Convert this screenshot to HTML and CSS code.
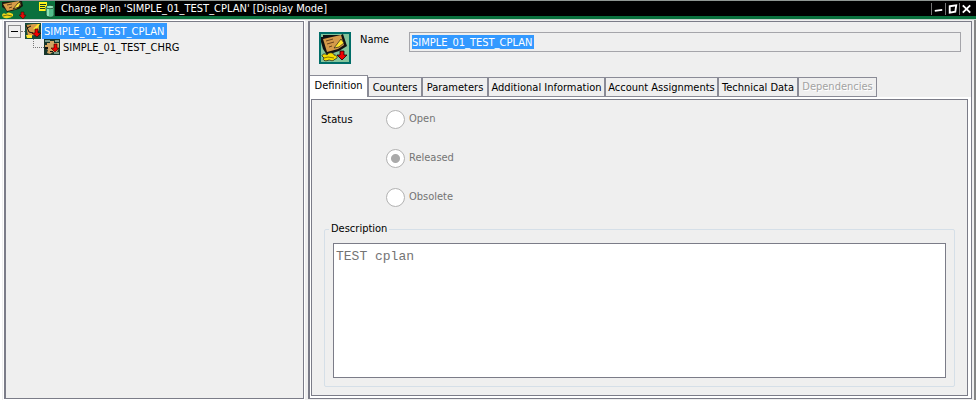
FILE: index.html
```html
<!DOCTYPE html>
<html lang="en">
<head>
<meta charset="utf-8">
<title>Charge Plan</title>
<link rel="stylesheet" href="styles.css">
</head>
<body>
<div class="window">
  <header class="titlebar">
    <div class="title-icons">
      <svg class="title-plan" viewBox="0 0 26 18" aria-hidden="true">
        <path fill="#18170e" d="M1 1 19 0h2l1 5-4 3-12 3-2-3-3-2z"/>
        <path fill="#d79c49" d="m2 3 16-3 2 4-5 4-9 2z"/>
        <path stroke="#634019" fill="none" d="m6 4 5-1M8 7l3-1"/>
        <path stroke="#111" stroke-width=".7" fill="#ffe83c" d="m12 8 5-6 3-1-2 5z"/>
        <path fill="#ecd719" d="M1 14q1-3 4-1 2-3 7 0v2q-2 2-5 2-5 1-6-3z"/>
        <path stroke="#736b0c" fill="none" d="m2 15 4-1 5 1"/>
        <path stroke="#310" stroke-width=".6" fill="#e00909" d="M20 11h3v3h2l-3 4-4-4h2z"/>
      </svg>
      <svg class="title-data" viewBox="0 0 16 18" aria-hidden="true">
        <path fill="#fff21c" d="M0 1h8v9H0z"/>
        <path stroke="#163c22" d="M1 3.500h6M1 5.500h5M1 7.500h5"/>
        <path stroke="#163c22" stroke-width=".7" fill="#52bd8b" d="M7 6v8c1 3 8 3 8 0V6z"/>
        <path fill="#8ce5b5" d="M8 7h2v8H8z"/>
        <ellipse cx="11" cy="6" rx="4" ry="1.700" stroke="#163c22" stroke-width=".7" fill="#94e9bc"/>
      </svg>
    </div>
    <h1>Charge Plan 'SIMPLE_01_TEST_CPLAN' [Display Mode]</h1>
    <div class="controls">
      <button aria-label="Minimize"><svg viewBox="0 0 14 12"><path d="m3 8 8-1"/></svg></button>
      <button aria-label="Maximize"><svg viewBox="0 0 14 12"><path d="m4 3 7-1-1 7-6 1z"/></svg></button>
      <button aria-label="Close"><svg viewBox="0 0 14 12"><path d="m3 2 8 8m0-8-8 8"/></svg></button>
    </div>
  </header>
  <main>
    <nav class="tree" aria-label="Charge plan tree">
      <div class="node">
        <button class="toggle" aria-label="Collapse"></button><span class="dots"></span>
        <svg class="node-icon" viewBox="0 0 16 16" aria-hidden="true">
          <path fill="#174c3b" d="M0 0h16v16H0z"/>
          <path fill="#d69a48" d="M1 2 8 1h6v6l-4 5-7 1z"/>
          <path stroke="#111" fill="none" d="m1 2 3 7 4 1M2 5l4-2"/>
          <path fill="#ffe82d" d="m8 6 5-5h2l-4 6zM1 12h6v3H2z"/>
          <path stroke="#200" stroke-width=".6" fill="#f00000" d="M10 6h3v4h3l-4 4-5-4h3z"/>
        </svg>
        <a href="#plan-tab" class="selected">SIMPLE_01_TEST_CPLAN</a>
      </div>
      <div class="node child">
        <span class="branch"></span>
        <svg class="node-icon" viewBox="0 0 16 16" aria-hidden="true">
          <path fill="#16352a" d="M0 0h16v16H0z"/>
          <path fill="#789987" d="M1 1h5v2H1zM11 1h4v2h-4zM10 13h5v2h-5z"/>
          <path fill="#d3a562" d="M3 4h3V2h4v2h5v5l-2 4H9l-3 2-3-1 1-3-3-2V6h2z"/>
          <path fill="#111" d="M1 8h3v2H1zM6 12h3v1H6z"/>
          <path stroke="#200" stroke-width=".6" fill="#f00000" d="M10 5h3v4h2l-4 4-4-4h3z"/>
        </svg>
        <a href="#plan-tab">SIMPLE_01_TEST_CHRG</a>
      </div>
    </nav>
    <section class="detail">
      <div class="identity">
        <svg class="plan-icon" viewBox="0 0 28 28" aria-hidden="true">
          <path fill="#83c49b" d="M0 0h28v28H0z"/>
          <path fill="#111" d="M0 3h2V1h18l2-1 4 12-8 5-12 4-4-6L0 8z"/>
          <path fill="#d49a4a" d="M2 5 20 1l3 10-6 4-11 3z"/>
          <path stroke="#6b431b" fill="none" d="m5 7 7-2M6 10l7-2M8 13l3-1"/>
          <path stroke="#222" stroke-width=".7" fill="#ffe62b" d="m13 14 7-9 3 4-5 4z"/>
          <path stroke="#222" stroke-width=".8" fill="#f5dc00" d="M1 22c0-2 3-3 5-1 1-3 7-3 7 0 4 0 4 4 1 4-2 3-5 1-6 1-4 2-7 0-5-2z"/>
          <path stroke="#8c7100" fill="none" d="m3 24 4-1 6 1"/>
          <path stroke="#160000" stroke-width=".8" fill="#f00000" d="M19 17h4v4h3l-5 5-5-5h3z"/>
        </svg>
        <label for="name">Name</label>
        <div class="name-field"><input id="name" readonly value="SIMPLE_01_TEST_CPLAN"></div>
      </div>
      <div class="tabs" role="tablist">
        <button role="tab" aria-selected="true" class="active">Definition</button>
        <button role="tab">Counters</button>
        <button role="tab">Parameters</button>
        <button role="tab">Additional Information</button>
        <button role="tab">Account Assignments</button>
        <button role="tab">Technical Data</button>
        <button role="tab" disabled>Dependencies</button>
      </div>
      <div class="sheet" id="plan-tab">
        <div class="page">
          <div class="status" role="radiogroup" aria-labelledby="status-label">
            <span id="status-label">Status</span>
            <div class="options">
              <label><input type="radio" name="status" disabled>Open</label>
              <label><input type="radio" name="status" disabled checked>Released</label>
              <label><input type="radio" name="status" disabled>Obsolete</label>
            </div>
          </div>
          <fieldset>
            <legend><label for="description">Description</label></legend>
            <textarea id="description" readonly>TEST cplan</textarea>
          </fieldset>
        </div>
      </div>
    </section>
  </main>
</div>
</body>
</html>
```
FILE: styles.css
```css
* { box-sizing: border-box; }
body {
  margin: 0;
  background: #efefef;
  color: #000;
  font: 11px/16px "DejaVu Sans Condensed", "DejaVu Sans", sans-serif;
}
button, input, textarea { font: inherit; color: inherit; margin: 0; }
a { color: inherit; text-decoration: none; }
.window {
  display: flex;
  flex-direction: column;
  min-height: 100vh;
  border-top: 1px solid #8f9692;
}
.titlebar {
  display: flex;
  align-items: flex-start;
  height: 19px;
  background: #0a703d;
  border-bottom: 1px solid #c8d0cc;
}
.title-icons { display: flex; width: 55px; padding-left: 1px; gap: 12px; }
.title-plan { width: 26px; height: 18px; }
.title-data { width: 16px; height: 18px; }
.titlebar h1 {
  flex: 1;
  height: 15px;
  margin: 0;
  padding-left: 6px;
  background: #000;
  color: #fff;
  font-size: 11px;
  font-weight: normal;
  line-height: 16px;
}
.controls { display: flex; height: 15px; padding: 2px 3px 0 0; background: #000; }
.controls button {
  width: 14px;
  height: 12px;
  padding: 0;
  border: 0;
  border-left: 1px solid #777;
  background: #000;
}
.controls svg { display: block; width: 13px; height: 12px; }
.controls path { fill: none; stroke: #fff; stroke-width: 2; }
main {
  flex: 1;
  display: grid;
  grid-template-columns: 300px 1fr;
  gap: 4px;
  padding: 1px 2px 1px 2px;
  border-right: 2px solid #858585;
  border-left: 2px solid #fff;
  background: #efefef;
}
.tree {
  border: 1px solid #7b7c88;
  border-left: 2px solid #7b7c88;
  outline: 1px solid #fff;
}
.node { display: flex; align-items: center; height: 16px; margin-top: 1px; }
.child { margin-top: 0; padding-left: 27px; }
.toggle {
  width: 13px;
  height: 13px;
  margin-left: 2px;
  padding: 0 2px;
  border: 1px solid #8b8b8b;
  background: #efefef;
}
.toggle::before { content: ""; display: block; height: 1px; background: #000; }
.dots { width: 4px; border-top: 1px dotted #777; }
.node-icon { width: 16px; height: 16px; flex: none; }
.node a { height: 16px; padding: 1px 3px 0 2px; line-height: 16px; margin-left: 1px; }
.node .selected { background: #3399ff; color: #fff; }
.branch {
  align-self: flex-start;
  width: 11px;
  height: 9px;
  border-left: 1px dotted #777;
  border-bottom: 1px dotted #777;
}
.detail {
  display: flex;
  flex-direction: column;
  min-width: 0;
  border: 1px solid #7b7c88;
  border-left-width: 2px;
}
.identity {
  display: flex;
  align-items: flex-start;
  padding: 10px 10px 11px 9px;
}
.plan-icon { width: 32px; height: 32px; border: 2px solid #006d68; flex: none; }
.identity label { width: 58px; padding-left: 9px; }
.name-field { flex: 1; display: flex; }
.identity input {
  flex: 1;
  min-width: 0;
  height: 20px;
  padding: 0 2px;
  border: 1px solid #a5a5aa;
  background: linear-gradient(#3399ff, #3399ff) 2px 2px / 122px 14px no-repeat #efefef;
  color: #fff;
}
.tabs {
  display: grid;
  grid-template-columns: 58px 54px 66px 117px 113px 80px 79px;
  align-items: end;
}
.tabs button {
  height: 20px;
  padding: 1px 0 0;
  border: 1px solid #8a8b96;
  background: #efefef;
  white-space: nowrap;
}
.tabs .active { height: 22px; padding-bottom: 2px; border-bottom: 0; border-left: 0; background: #fff; }
.tabs button:disabled { padding: 0; color: #a2a2a2; text-shadow: 1px 1px #fff; }
.sheet { flex: 1; display: flex; padding: 2px 3px 2px 1px; background: #fff; }
.page {
  flex: 1;
  display: flex;
  flex-direction: column;
  min-width: 0;
  padding: 9px 12px 8px;
  border: 1px solid #7b7c88;
  background: #efefef;
}
.status { display: flex; margin-left: -3px; }
.status > span { width: 65px; line-height: 22px; }
.options { display: grid; gap: 19px; }
.options label { display: flex; align-items: center; gap: 4px; height: 20px; color: #747474; }
.options input {
  appearance: none;
  width: 19px;
  height: 19px;
  border: 1px solid #b2b2b2;
  border-radius: 50%;
  background: #fff;
}
.options input:checked { background: radial-gradient(circle, #aaa 4px, #fff 5px); }
fieldset {
  flex: 1;
  display: flex;
  min-width: 0;
  margin: 14px 0 0;
  padding: 6px 8px 8px;
  border: 1px solid #d5dfe8;
  border-radius: 2px;
}
legend { padding: 0 2px; margin-left: -4px; }
textarea {
  flex: 1;
  min-width: 0;
  padding: 5px 2px;
  border: 1px solid #7b7c88;
  background: #fff;
  color: #747474;
  font: 13px/16px "Liberation Mono", monospace;
  resize: none;
}
:focus { outline: none; }
```
